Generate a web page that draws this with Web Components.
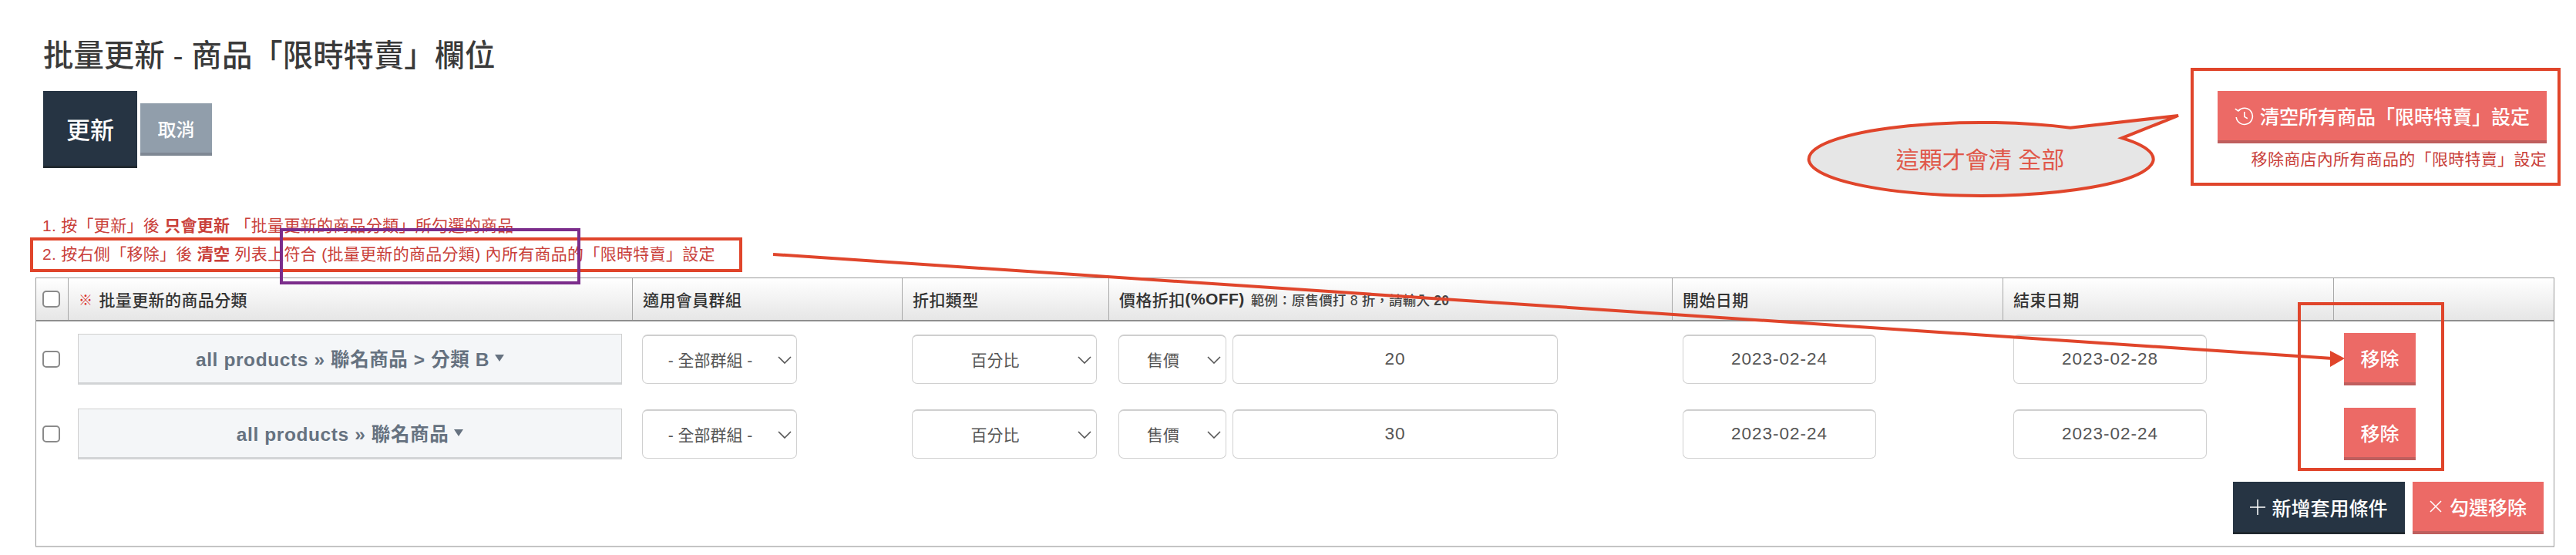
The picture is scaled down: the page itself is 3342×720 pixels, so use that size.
<!DOCTYPE html>
<html lang="zh-Hant">
<head>
<meta charset="UTF-8">
<title>批量更新</title>
<style>
  html, body { margin: 0; background: #fff; }
  body { font-family: "Liberation Sans", "Noto Sans CJK TC", sans-serif; color: #333; }
</style>
</head>
<body>
<flash-page>
  <page-head slot="head"></page-head>
  <rule-table slot="table">
    <rule-row cat="all products » 聯名商品 > 分類 B" amount="20" start="2023-02-24" end="2023-02-28"></rule-row>
    <rule-row cat="all products » 聯名商品" amount="30" start="2023-02-24" end="2023-02-24"></rule-row>
  </rule-table>
  <note-overlay slot="overlay"></note-overlay>
</flash-page>

<script>
const CHEVRON = `<svg width="18" height="10" viewBox="0 0 18 10" fill="none" stroke="#555" stroke-width="1.6"><path d="M1 1l8 8 8-8"/></svg>`;

class FlashPage extends HTMLElement {
  constructor() {
    super();
    this.attachShadow({mode: "open"}).innerHTML = `
      <style>
        :host { display: block; position: relative; width: 3342px; height: 720px; overflow: hidden; }
        .wrap { padding: 0 28px 0 46px; display: flex; flex-direction: column; }
      </style>
      <div class="wrap">
        <slot name="head"></slot>
        <slot name="table"></slot>
      </div>
      <slot name="overlay"></slot>`;
  }
}

class ActionBtn extends HTMLElement {
  constructor() {
    super();
    this.attachShadow({mode: "open"}).innerHTML = `
      <style>
        :host { display: inline-flex; align-items: center; justify-content: center; box-sizing: border-box;
                color: #fff; font-weight: 500; white-space: nowrap; font-size: 25px; }
        :host([kind=dark]) { background: #263443; border-bottom: 3px solid #20292f; }
        :host([kind=grey]) { background: #919eab; border-bottom: 4px solid #7f8894; }
        :host([kind=red]) { background: #ec6a66; border-bottom: 4px solid #bf5f5e; }
      </style>
      <slot></slot>`;
  }
}

class PageHead extends HTMLElement {
  constructor() {
    super();
    this.attachShadow({mode: "open"}).innerHTML = `
      <style>
        :host { display: flex; justify-content: space-between; height: 360px; box-sizing: border-box; padding-left: 10px; }
        h1 { margin: 53px 0 27px; font-size: 39.4px; line-height: 38px; font-weight: 500; color: #3a3a3a; }
        .btns { display: flex; align-items: center; gap: 4px; }
        .update { width: 122px; height: 100px; font-size: 31px; }
        .cancel { width: 93px; height: 68px; font-size: 24px; }
        .notes { margin: 56px 0 0 -1px; font-size: 21px; line-height: 37px; color: #c9403a; letter-spacing: .3px; }
        .side { padding: 118px 10px 0 0; display: flex; flex-direction: column; align-items: flex-end; }
        .clear { width: 427px; height: 68px; gap: 8px; }
        .clear svg { flex: none; }
        .sub { margin-top: 9px; font-size: 21px; line-height: 24px; color: #c9403a; letter-spacing: .3px; }
      </style>
      <div>
        <h1>批量更新 - 商品「限時特賣」欄位</h1>
        <div class="btns">
          <action-btn kind="dark" class="update">更新</action-btn>
          <action-btn kind="grey" class="cancel">取消</action-btn>
        </div>
        <div class="notes">
          1. 按「更新」後 <b>只會更新</b> 「批量更新的商品分類」所勾選的商品<br>
          2. 按右側「移除」後 <b>清空</b> 列表上符合 (批量更新的商品分類) 內所有商品的「限時特賣」設定
        </div>
      </div>
      <div class="side">
        <action-btn kind="red" class="clear">
          <svg width="25" height="25" viewBox="0 0 25 25" fill="none" stroke="#fff" stroke-width="1.6">
            <path d="M5 5.6A10.6 10.6 0 1 1 2.2 14"/><path d="M.8 3.2l4 2.8 3.2-2.6"/><path d="M12.8 7v6.4l4 2.4"/>
          </svg><span>清空所有商品「限時特賣」設定</span>
        </action-btn>
        <div class="sub">移除商店內所有商品的「限時特賣」設定</div>
      </div>`;
  }
}

class PickBox extends HTMLElement {
  constructor() {
    super();
    this.attachShadow({mode: "open"}).innerHTML = `
      <style>
        :host { display: flex; position: relative; align-items: center; justify-content: center; box-sizing: border-box;
                height: 64px; background: #fff; border: 1px solid #d0d0d0; border-top: 2px solid #cfcfcf; border-radius: 7px;
                font-size: 21px; color: #555; padding-right: 24px; white-space: nowrap; }
        :host([plain]) { padding-right: 0; font-size: 22.5px; letter-spacing: 1px; }
        svg { position: absolute; right: 6px; top: 26px; }
      </style>
      <slot></slot>${this.hasAttribute("plain") ? "" : CHEVRON}`;
  }
}

class TickBox extends HTMLElement {
  constructor() {
    super();
    this.attachShadow({mode: "open"}).innerHTML = `
      <style>
        :host { display: block; box-sizing: border-box; width: 23px; height: 22px; background: #fff;
                border: 2px solid #8a8a8a; border-radius: 5px; }
      </style>`;
  }
}

const COLS = "41px 732px 350px 268px 731px 429px 429px 1fr";

class RuleTable extends HTMLElement {
  constructor() {
    super();
    this.attachShadow({mode: "open"}).innerHTML = `
      <style>
        :host { display: block; box-sizing: border-box; height: 350px; border: 1px solid #9a9a9a; border-bottom: 2px solid #c4c4c4; }
        .head { display: grid; grid-template-columns: ${COLS}; height: 56px; box-sizing: border-box;
                border-bottom: 2px solid #8f8f8f; background: linear-gradient(#fff, #e6e6e6);
                font-size: 21px; font-weight: 500; color: #333; letter-spacing: .4px; }
        .head > div { display: flex; align-items: center; padding-left: 13px; border-left: 1px solid #a8a8a8; white-space: nowrap; }
        .head > div:first-child { border-left: 0; padding-left: 8px; }
        .req { color: #d9302a; margin-right: 8px; font-size: 18px; }
        small { font-size: 17.5px; margin-left: 8px; color: #444; letter-spacing: .2px; }
        .foot { display: flex; justify-content: flex-end; gap: 10px; padding: 14px 13px 0 0; }
        .add { width: 223px; height: 68px; gap: 8px; }
        .drop { width: 170px; height: 68px; gap: 10px; }
      </style>
      <div class="head">
        <div><tick-box></tick-box></div>
        <div><span class="req">※</span>批量更新的商品分類</div>
        <div>適用會員群組</div>
        <div>折扣類型</div>
        <div>價格折扣<b>(%OFF)</b><small>範例：原售價打 8 折，請輸入 <b>20</b></small></div>
        <div>開始日期</div>
        <div>結束日期</div>
        <div></div>
      </div>
      <slot></slot>
      <div class="foot">
        <action-btn kind="dark" class="add">
          <svg width="20" height="20" viewBox="0 0 20 20" stroke="#fff" stroke-width="1.5"><path d="M0 10h20M10 0v20"/></svg><span>新增套用條件</span>
        </action-btn>
        <action-btn kind="red" class="drop">
          <svg width="16" height="16" viewBox="0 0 16 16" stroke="#fff" stroke-width="1.5"><path d="M1 1l14 14M15 1L1 15"/></svg><span>勾選移除</span>
        </action-btn>
      </div>`;
  }
}

class RuleRow extends HTMLElement {
  constructor() {
    super();
    const a = n => this.getAttribute(n);
    this.attachShadow({mode: "open"}).innerHTML = `
      <style>
        :host { display: grid; grid-template-columns: ${COLS}; height: 97px; align-items: center; }
        .tick { padding-left: 8px; }
        .cat { margin: 0 13px; height: 66px; box-sizing: border-box; display: flex; align-items: center; justify-content: center;
               background: #f4f6f8; border: 1px solid #cfcfcf; border-bottom: 3px solid #d2d4d6;
               color: #667280; font-size: 24.5px; letter-spacing: .6px; font-weight: 700; white-space: nowrap; }
        .cat i { display: inline-block; margin-left: 7px; border: 6px solid transparent; border-top: 9px solid #667280; border-bottom: 0; }
        .group { margin: 0 136px 0 13px; }
        .type { margin: 0 15px 0 13px; }
        .price { display: flex; gap: 8px; padding-left: 13px; }
        .price pick-box:first-child { width: 140px; }
        .price pick-box:last-child { width: 422px; }
        .date { margin: 0 164px 0 14px; width: 251px; }
        .del { margin-left: 14px; width: 93px; height: 68px; }
      </style>
      <div class="tick"><tick-box></tick-box></div>
      <div class="cat"><span>${a("cat").replace(">", "&gt;")}</span><i></i></div>
      <pick-box class="group">- 全部群組 -</pick-box>
      <pick-box class="type">百分比</pick-box>
      <div class="price"><pick-box>售價</pick-box><pick-box plain>${a("amount")}</pick-box></div>
      <pick-box plain class="date">${a("start")}</pick-box>
      <pick-box plain class="date">${a("end")}</pick-box>
      <action-btn kind="red" class="del">移除</action-btn>`;
  }
}

// hand drawn notes lying on top of the screenshot
class NoteOverlay extends HTMLElement {
  constructor() {
    super();
    this.attachShadow({mode: "open"}).innerHTML = `
      <style>
        :host { display: block; position: absolute; left: 0; top: 0; pointer-events: none; }
        svg { display: block; }
        rect { fill: none; stroke: #e0452b; stroke-width: 4; }
        text { font-size: 30px; fill: #e0584a; text-anchor: middle; font-family: "Liberation Sans", "Noto Sans CJK TC", sans-serif; }
      </style>
      <svg width="3342" height="720" viewBox="0 0 3342 720">
        <rect x="41" y="310" width="920" height="41"/>
        <rect x="365" y="298" width="386" height="69" style="stroke:#7b2d8b"/>
        <rect x="2844" y="90" width="476" height="149"/>
        <rect x="2983" y="394" width="186" height="215"/>
        <path d="M1003 330L3026 465" stroke="#e0452b" stroke-width="4"/>
        <path d="M3023 455L3042 465L3023 476Z" fill="#e0452b"/>
        <path d="M2753 179.1A223.5 47.5 0 1 1 2686 165.8L2826 150Z" fill="#e6e6e6" stroke="#e0452b" stroke-width="4"/>
        <text x="2569" y="218">這顆才會清 全部</text>
      </svg>`;
  }
}

customElements.define("flash-page", FlashPage);
customElements.define("action-btn", ActionBtn);
customElements.define("page-head", PageHead);
customElements.define("pick-box", PickBox);
customElements.define("tick-box", TickBox);
customElements.define("rule-table", RuleTable);
customElements.define("rule-row", RuleRow);
customElements.define("note-overlay", NoteOverlay);
</script>
</body>
</html>
